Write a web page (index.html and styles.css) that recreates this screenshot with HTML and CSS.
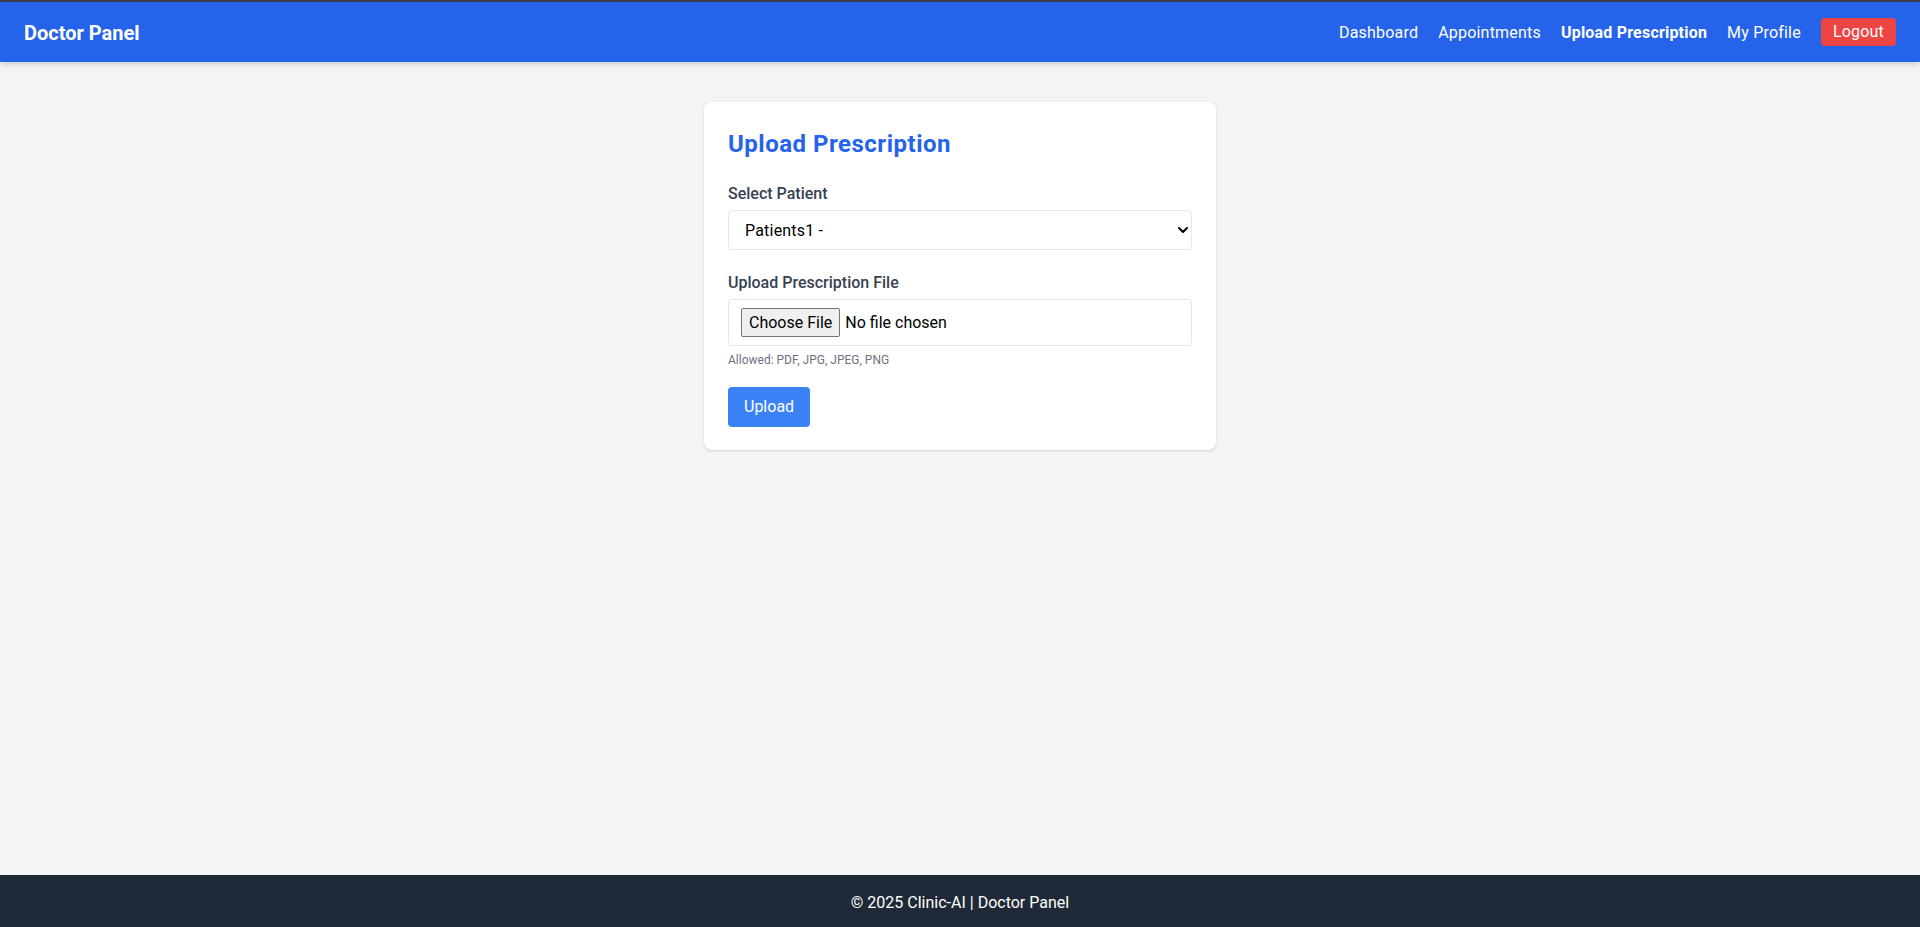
FILE: index.html
```html
<!DOCTYPE html>
<html lang="en">
<head>
<meta charset="utf-8">
<title>Upload Prescription - Doctor Panel</title>
<link rel="stylesheet" href="styles.css">
</head>
<body>
  <nav class="navbar">
    <a class="brand" href="#">Doctor Panel</a>
    <div class="nav-links">
      <a class="nav-link" href="#">Dashboard</a>
      <a class="nav-link" href="#">Appointments</a>
      <a class="nav-link active" href="#">Upload Prescription</a>
      <a class="nav-link" href="#">My Profile</a>
      <a class="logout" href="#">Logout</a>
    </div>
  </nav>

  <main class="main">
    <section class="card">
      <h2 class="card-title">Upload Prescription</h2>
      <form class="form">
        <label class="field-label first" for="patient">Select Patient</label>
        <div class="select-wrap">
          <select id="patient" class="select">
            <option>Patients1 - </option>
          </select>
          <svg class="chevron" width="10" height="6" viewBox="0 0 10 6" aria-hidden="true">
            <path d="M1 1 L5 5 L9 1" fill="none" stroke="#000" stroke-width="2" stroke-linecap="round" stroke-linejoin="round"/>
          </svg>
        </div>

        <label class="field-label second" for="file">Upload Prescription File</label>
        <input id="file" class="file-input" type="file">
        <p class="hint">Allowed: PDF, JPG, JPEG, PNG</p>

        <button type="button" class="btn">Upload</button>
      </form>
    </section>
  </main>

  <footer class="footer">© 2025 Clinic-AI | Doctor Panel</footer>
</body>
</html>
```
FILE: styles.css
```css
* {
  box-sizing: border-box;
}

html, body {
  margin: 0;
  padding: 0;
}

body {
  min-height: 100vh;
  display: flex;
  flex-direction: column;
  background: #f3f4f6;
  font-family: "Segoe UI", Roboto, "Liberation Sans", sans-serif;
  font-size: 16px;
  line-height: 24px;
  color: #111827;
}

a {
  text-decoration: none;
  color: inherit;
}

/* Navbar */
.navbar {
  height: 62px;
  border-top: 2px solid #3b3e43;
  background: #2563eb;
  padding: 0 24px;
  display: flex;
  align-items: center;
  justify-content: space-between;
  box-shadow: 0 4px 6px -1px rgba(0, 0, 0, 0.1), 0 2px 4px -1px rgba(0, 0, 0, 0.06);
  position: relative;
  z-index: 1;
}

.brand {
  color: #ffffff;
  font-size: 20px;
  line-height: 28px;
  font-weight: 700;
  padding-top: 1px;
}

.nav-links {
  display: flex;
  align-items: center;
  gap: 20px;
}

.nav-link {
  color: #ffffff;
  font-size: 16px;
  line-height: 24px;
  letter-spacing: 0.2px;
  padding-top: 1px;
}

.nav-link.active {
  font-weight: 700;
}

.logout {
  color: #ffffff;
  background: #ef4444;
  border-radius: 4px;
  padding: 4px 12px;
  font-size: 16px;
  line-height: 20px;
  letter-spacing: 0.2px;
}

/* Main */
.main {
  flex: 1;
  display: flex;
  justify-content: center;
  align-items: flex-start;
  padding-top: 40px;
}

.card {
  width: 512px;
  background: #ffffff;
  border-radius: 8px;
  padding: 24px 24px 23px;
  box-shadow: 0 1px 3px rgba(0, 0, 0, 0.1), 0 1px 2px rgba(0, 0, 0, 0.06);
}

.card-title {
  margin: 0;
  color: #2563eb;
  font-size: 24px;
  line-height: 36px;
  font-weight: 700;
  letter-spacing: 0.5px;
}

.form {
  display: flex;
  flex-direction: column;
  align-items: stretch;
}

.field-label {
  display: block;
  color: #374151;
  font-size: 16px;
  line-height: 24px;
  font-weight: 500;
}

.field-label.first {
  margin-top: 20px;
}

.field-label.second {
  margin-top: 21px;
}

.select-wrap {
  position: relative;
  margin-top: 4px;
}

.select {
  -webkit-appearance: none;
  appearance: none;
  display: block;
  width: 100%;
  height: 40px;
  padding: 0 28px 0 16px;
  border: 1px solid #e5e7eb;
  border-radius: 4px;
  background: #ffffff;
  color: #000000;
  font-family: inherit;
  font-size: 16px;
  letter-spacing: 0.2px;
  outline: none;
}

.chevron {
  position: absolute;
  right: 4px;
  top: 50%;
  transform: translateY(-50%);
  pointer-events: none;
}

.file-input {
  display: block;
  width: 100%;
  height: 47px;
  margin-top: 4px;
  padding: 8px 12px;
  border: 1px solid #e5e7eb;
  border-radius: 4px;
  background: #ffffff;
  color: #000000;
  font-family: inherit;
  font-size: 16px;
  line-height: 29px;
}

.file-input::file-selector-button {
  height: 29px;
  margin: 0 5px 0 0;
  padding: 0 7px;
  border: 1px solid #767676;
  border-radius: 2px;
  background: #efefef;
  color: #000000;
  font-family: inherit;
  font-size: 16px;
}

.hint {
  margin: 6px 0 0;
  color: #6b7280;
  font-size: 12px;
  line-height: 16px;
}

.btn {
  align-self: flex-start;
  margin-top: 19px;
  height: 40px;
  padding: 0 16px;
  border: none;
  border-radius: 4px;
  background: #3b82f6;
  color: #ffffff;
  font-family: inherit;
  font-size: 16px;
  line-height: 24px;
  cursor: pointer;
}

/* Footer */
.footer {
  background: #1f2937;
  color: #ffffff;
  text-align: center;
  padding: 16px 0 12px;
  font-size: 16px;
  line-height: 24px;
}
```
